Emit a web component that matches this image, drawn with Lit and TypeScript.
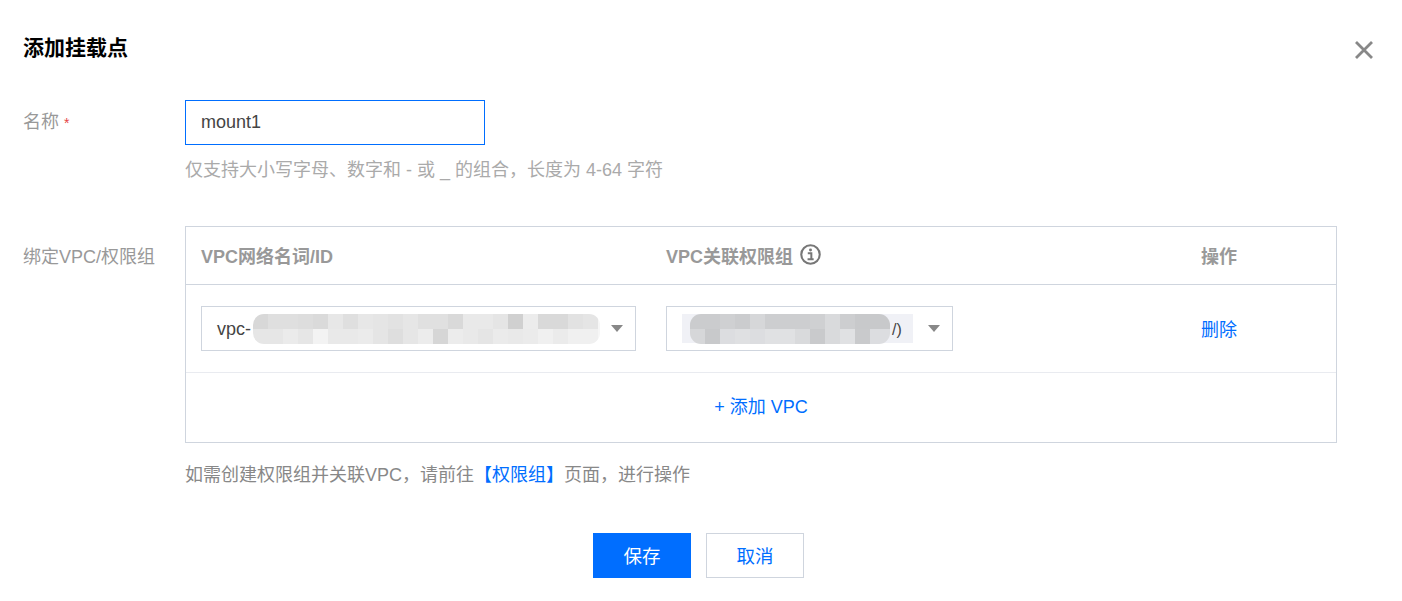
import { LitElement, html, css } from "lit";
import { customElement } from "lit/decorators.js";

// mosaic colours, read off the blurred ids in the reference
const VPC_TOP = ["#d8d8d8", "#dfdfdf", "#dfdfdf", "#dddddd", "#dadada", "#e7e7e7", "#dfdfdf", "#e7e7e7", "#e5e5e5", "#e2e2e2", "#e6e6e6", "#e0e0e0", "#e0e0e0", "#d9d9d9", "#e9e9e9", "#e9e9e9", "#e5e5e5", "#d0d0d0", "#ececec", "#d9d9d9", "#d9d9d9", "#e2e2e2", "#e5e5e5", "#f6f6f6"];
const VPC_BOTTOM = ["#e6e6e6", "#e6e6e6", "#ebebeb", "#e6e6e6", "#f3f3f3", "#e9e9e9", "#e9e9e9", "#ebebeb", "#e5e5e5", "#dedede", "#e6e6e6", "#ececec", "#d6d6d6", "#ececec", "#e9e9e9", "#e5e5e5", "#ebebeb", "#e9e9e9", "#ebebeb", "#f0f0f0", "#ebebeb", "#f0f0f0", "#f0f0f0", "#f6f6f6"];
const GROUP_TOP = ["#cbccce", "#cbccce", "#cfd0d2", "#cbccce", "#d6d7d9", "#cdced0", "#cdced0", "#cdced0", "#cfd0d2", "#d9dadc", "#cdced0", "#c8c9cb", "#c8c9cb", "#c8c9cb"];
const GROUP_BOTTOM = ["#d6d7d9", "#c8c9cb", "#dcdde0", "#dfe0e2", "#dcdde0", "#e0e1e3", "#e0e1e3", "#d9dadc", "#c9cacc", "#d9dadc", "#e0e1e3", "#c9cacc", "#dcdde0", "#dcdde0"];

@customElement("app-root")
export class AppRoot extends LitElement {
  static styles = css`
    :host {
      display: block;
      height: 601px;
      background: #fff;
      font-family: "Liberation Sans", "Noto Sans CJK SC", sans-serif;
      font-size: 16px;
      color: #888;
    }
    .dialog { padding: 0 28px 0 23px; }
    .head {
      display: flex;
      justify-content: space-between;
      align-items: center;
      height: 100px;
      padding-bottom: 4px;
      box-sizing: border-box;
    }
    .title { font-size: 21px; font-weight: 700; color: #000; line-height: 30px; }
    .close { width: 20px; height: 20px; display: block; margin-top: 4px; }
    .row { display: flex; }
    .label { width: 162px; flex: none; font-size: 18px; color: #999; }
    .label-name { line-height: 44px; height: 44px; }
    .star { color: #e54545; font-size: 14px; }
    .name-input {
      box-sizing: border-box;
      width: 300px;
      height: 45px;
      border: 1px solid #006eff;
      padding: 0 15px;
      display: flex;
      align-items: center;
      font-size: 18px;
      color: #444;
    }
    .hint { font-size: 18px; color: #aaa; margin-top: 13px; line-height: 24px; height: 24px; white-space: pre; }
    .bind { margin-top: 44px; }
    .label-bind { padding-top: 17px; line-height: 28px; font-size: 18px; }
    .table {
      box-sizing: border-box;
      width: 1152px;
      border: 1px solid #cfd5de;
    }
    .cols { display: grid; grid-template-columns: 465px 535px 1fr; padding-left: 15px; }
    .cols > div { display: flex; align-items: center; }
    .thead { height: 57px; border-bottom: 1px solid #cfd5de; font-size: 18px; font-weight: 700; color: #999; }
    .thead > div { padding-bottom: 2px; }
    .thead .tip { width: 21px; height: 21px; margin-left: 7px; }
    .tbody { height: 87px; border-bottom: 1px solid #e9ebf0; }
    .select {
      box-sizing: border-box;
      height: 45px;
      border: 1px solid #cfd5de;
      padding-left: 15px;
      display: flex;
      align-items: center;
      font-size: 18px;
      color: #444;
    }
    .select-text { padding-top: 2px; }
    .select-vpc { width: 435px; }
    .select-group { width: 287px; }
    .arrow {
      margin-left: auto;
      margin-right: 12px;
      flex: none;
      width: 0;
      height: 0;
      border-left: 6px solid transparent;
      border-right: 6px solid transparent;
      border-top: 7px solid #888;
    }
    .mosaic { overflow: hidden; border-radius: 11px; display: grid; grid-template-rows: 15px 15px; }
    .strip { display: flex; }
    .strip i { display: block; width: 15px; height: 15px; flex: none; }
    .mosaic-vpc { width: 347px; margin-left: 2px; }
    .group-wrap {
      display: flex;
      align-items: center;
      background: #f0f1f6;
      width: 231px;
      height: 29px;
      padding-left: 8px;
      box-sizing: border-box;
    }
    .mosaic-group { width: 200px; flex: none; height: 30px; }
    .group-tail { margin-left: 2px; padding-top: 2px; font-size: 16px; color: #444; white-space: pre; }
    .link { color: #006eff; font-size: 18px; }
    .tbody .link { padding-bottom: 2px; }
    .add { height: 69px; padding-bottom: 5px; box-sizing: border-box; display: flex; align-items: center; justify-content: center; font-size: 18px; color: #006eff; }
    .note { font-size: 18px; color: #888; margin-top: 20px; line-height: 24px; margin-left: 162px; white-space: pre; }
    .foot { display: flex; justify-content: center; gap: 15px; margin-top: 46px; }
    .btn {
      box-sizing: border-box;
      width: 98px;
      height: 45px;
      padding-bottom: 2px;
      display: flex;
      align-items: center;
      justify-content: center;
      font-size: 18.5px;
    }
    .primary { background: #006eff; color: #fff; }
    .plain { border: 1px solid #cfd5de; color: #006eff; }
  `;

  private strip(colors: string[]) {
    return html`<div class="strip">
      ${colors.map((c) => html`<i style="background:${c}"></i>`)}
    </div>`;
  }

  render() {
    return html`
      <div class="dialog">
        <div class="head">
          <div class="title">添加挂载点</div>
          <svg class="close" viewBox="0 0 20 20">
            <path d="M2 2 18 18M18 2 2 18" stroke="#888" stroke-width="2.8" fill="none" />
          </svg>
        </div>

        <div class="row">
          <div class="label label-name">名称 <span class="star">*</span></div>
          <div>
            <div class="name-input">mount1</div>
            <div class="hint">仅支持大小写字母、数字和 - 或 _ 的组合，长度为 4-64 字符</div>
          </div>
        </div>

        <div class="row bind">
          <div class="label label-bind">绑定VPC/权限组</div>
          <div class="table">
            <div class="cols thead">
              <div>VPC网络名词/ID</div>
              <div>
                VPC关联权限组
                <svg class="tip" viewBox="0 0 20 20">
                  <circle cx="10" cy="10" r="8.8" stroke="#777" stroke-width="2" fill="none" />
                  <circle cx="10" cy="5.8" r="1.4" fill="#777" />
                  <path d="M7.4 8.8H10.8V14.4M7.2 14.6H13" stroke="#777" stroke-width="1.9" fill="none" />
                </svg>
              </div>
              <div>操作</div>
            </div>
            <div class="cols tbody">
              <div>
                <div class="select select-vpc">
                  <span class="select-text">vpc-</span>
                  <div class="mosaic mosaic-vpc">
                    ${this.strip(VPC_TOP)}${this.strip(VPC_BOTTOM)}
                  </div>
                  <span class="arrow"></span>
                </div>
              </div>
              <div>
                <div class="select select-group">
                  <div class="group-wrap">
                    <div class="mosaic mosaic-group">
                      ${this.strip(GROUP_TOP)}${this.strip(GROUP_BOTTOM)}
                    </div>
                    <span class="group-tail">/)</span>
                  </div>
                  <span class="arrow"></span>
                </div>
              </div>
              <div class="link">删除</div>
            </div>
            <div class="add">+ 添加 VPC</div>
          </div>
        </div>

        <div class="note">如需创建权限组并关联VPC，请前往<span class="link">【权限组】</span>页面，进行操作</div>

        <div class="foot">
          <div class="btn primary">保存</div>
          <div class="btn plain">取消</div>
        </div>
      </div>
    `;
  }
}
